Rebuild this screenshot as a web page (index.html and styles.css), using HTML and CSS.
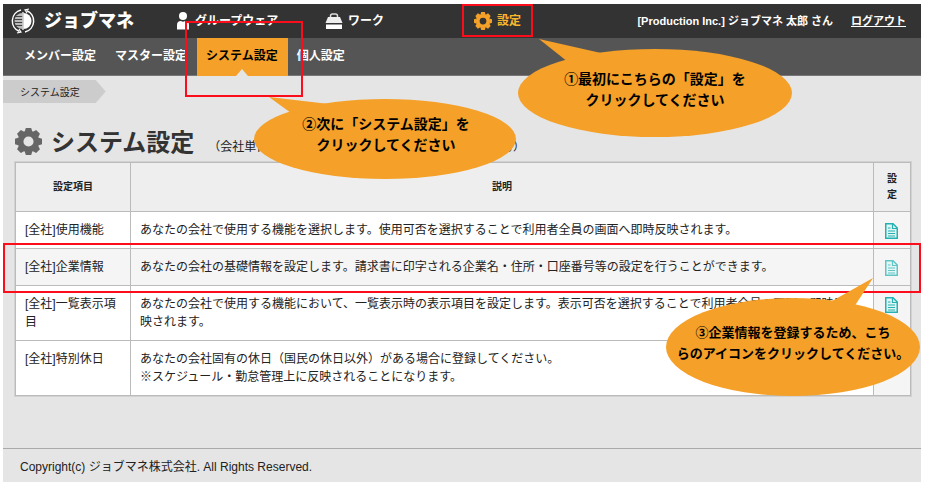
FILE: index.html
```
<!DOCTYPE html>
<html lang="ja">
<head>
    <meta charset="UTF-8">
    <meta name="viewport" content="width=device-width, initial-scale=1.0">
    <title>システム設定 | ジョブマネ</title>
    <link rel="stylesheet" href="styles.css">
</head>
<body>
    <!-- shared icons -->
    <svg class="icon-defs" width="0" height="0" aria-hidden="true">
        <symbol id="icon-gear" viewBox="0 0 24 24">
            <circle cx="12" cy="12" r="7" fill="none" stroke="currentColor" stroke-width="5"/>
            <g fill="currentColor">
                <path id="tooth" d="M8.5 3.5 9.6 0h4.8l1.1 3.5z"/>
                <use href="#tooth" transform="rotate(45 12 12)"/>
                <use href="#tooth" transform="rotate(90 12 12)"/>
                <use href="#tooth" transform="rotate(135 12 12)"/>
                <use href="#tooth" transform="rotate(180 12 12)"/>
                <use href="#tooth" transform="rotate(225 12 12)"/>
                <use href="#tooth" transform="rotate(270 12 12)"/>
                <use href="#tooth" transform="rotate(315 12 12)"/>
            </g>
        </symbol>
        <symbol id="icon-doc" viewBox="0 0 13 16">
            <path d="M.75.75H8L12.25 5v10.25H.75z" fill="#e2f5f5" stroke="currentColor" stroke-width="1.5"/>
            <path d="M7.5.5v5h5M3 5h2.5M3 8h7M3 10.5h7M3 13h7" fill="none" stroke="currentColor" stroke-width="1.2"/>
        </symbol>
    </svg>

<div class="page">
    <header class="header">
        <a class="logo" href="#">
            <svg class="logo-mark" viewBox="0 0 26 26" aria-hidden="true">
                <path d="M12.500 5a8 8 0 0 0 0 16z" fill="#bbb"/>
                <path d="M5 8.500h8M4 11.500h9M4 14.500h9M5 17.500h8" stroke="#444" stroke-width="1"/>
                <path d="M13.500 5a8 8 0 0 1 0 16z" fill="#fff"/>
                <path d="M13 4v18" stroke="#fff" stroke-width="1.200"/>
                <path d="M11 2A11.300 11.300 0 0 0 9.500 23.500M15 24A11.300 11.300 0 0 0 16.500 2.500" fill="none" stroke="#fff" stroke-width="1.500"/>
                <path d="M7 25l4-1-2-3M19 1l-4 1 2 3" fill="none" stroke="#fff" stroke-width="1.200"/>
            </svg>
            <span>ジョブマネ</span>
        </a>
        <nav class="main-nav">
            <a href="#">
                <svg class="icon-person" viewBox="0 0 14 18" aria-hidden="true"><circle cx="7" cy="4" r="4" fill="#fff"/><path d="M1 17.500V13q0-4 4-4 2 1.500 4 0 4 0 4 4v4.500z" fill="#fff"/></svg>
                <span>グループウェア</span>
            </a>
            <a href="#">
                <svg class="icon-case" viewBox="0 0 18 16" aria-hidden="true"><path d="M5.500 5V3q0-2 2-2h3q2 0 2 2v2" fill="none" stroke="#ddd" stroke-width="1.500"/><path d="M3 4h12l2.500 6H.5z" fill="#eee"/><path d="M1 11.500h16V16H1z" fill="#fff"/></svg>
                <span>ワーク</span>
            </a>
            <a class="current" href="#">
                <svg class="icon-setting" aria-hidden="true"><use href="#icon-gear"/></svg>
                <span>設定</span>
            </a>
        </nav>
        <div class="user">
            <span>[Production Inc.] ジョブマネ 太郎 さん</span>
            <a href="#">ログアウト</a>
        </div>
    </header>

    <nav class="sub-nav">
        <a href="#">メンバー設定</a>
        <a href="#">マスター設定</a>
        <a class="active" href="#">システム設定</a>
        <a href="#">個人設定</a>
    </nav>

    <main class="content">
        <div class="breadcrumb"><span>システム設定</span></div>
        <div class="title">
            <svg class="icon-title" aria-hidden="true"><use href="#icon-gear"/></svg>
            <h1>システム設定</h1>
            <p>（会社単位で使用する機能や基本情報の設定ができます。）</p>
        </div>

        <table class="settings">
            <thead>
                <tr>
                    <th class="col-name">設定項目</th>
                    <th>説明</th>
                    <th class="col-link">設定</th>
                </tr>
            </thead>
            <tbody>
                <tr>
                    <td>[全社]使用機能</td>
                    <td>あなたの会社で使用する機能を選択します。使用可否を選択することで利用者全員の画面へ即時反映されます。</td>
                    <td class="link"><a href="#" aria-label="使用機能の設定"><svg><use href="#icon-doc"/></svg></a></td>
                </tr>
                <tr class="hover">
                    <td>[全社]企業情報</td>
                    <td>あなたの会社の基礎情報を設定します。請求書に印字される企業名・住所・口座番号等の設定を行うことができます。</td>
                    <td class="link"><a href="#" aria-label="企業情報の設定"><svg><use href="#icon-doc"/></svg></a></td>
                </tr>
                <tr>
                    <td>[全社]一覧表示項目</td>
                    <td>あなたの会社で使用する機能において、一覧表示時の表示項目を設定します。表示可否を選択することで利用者全員の画面へ即時反映されます。</td>
                    <td class="link"><a href="#" aria-label="一覧表示項目の設定"><svg><use href="#icon-doc"/></svg></a></td>
                </tr>
                <tr>
                    <td>[全社]特別休日</td>
                    <td>あなたの会社固有の休日（国民の休日以外）がある場合に登録してください。<br>※スケジュール・勤怠管理上に反映されることになります。</td>
                    <td class="link"></td>
                </tr>
            </tbody>
        </table>
    </main>

    <footer class="footer">Copyright(c) ジョブマネ株式会社. All Rights Reserved.</footer>

    <!-- step by step guide, over the page -->
    <div class="frame frame-1"></div>
    <div class="frame frame-2"></div>
    <div class="frame frame-3"></div>

    <div class="callout callout-1">
        <svg viewBox="0 0 276 100" aria-hidden="true"><ellipse cx="138" cy="55" rx="137" ry="44"/><path d="M22 1l62 14-33 9z"/></svg>
        <p>①最初にこちらの「設定」を<br>クリックしてください</p>
    </div>
    <div class="callout callout-2">
        <svg viewBox="0 0 264 84" aria-hidden="true"><ellipse cx="131" cy="43" rx="131" ry="40"/><path d="M15 1l60 7-38 9z"/></svg>
        <p>②次に「システム設定」を<br>クリックしてください</p>
    </div>
    <div class="callout callout-3">
        <svg viewBox="0 0 256 118" aria-hidden="true"><ellipse cx="128" cy="69" rx="127" ry="49"/><path d="M208 0l-41 23 20 9z"/></svg>
        <p>③企業情報を登録するため、こち<br>らのアイコンをクリックしてください。</p>
    </div>
</div>
</body>
</html>
```
FILE: styles.css
```
* {
    box-sizing: border-box;
}

body {
    margin: 0;
    padding: 4px 4px 4px 3px;
    background: #fff;
    color: #222;
    font-family: "Liberation Sans", "Noto Sans CJK JP", sans-serif;
    font-size: 12px;
    line-height: 18px;
}

h1, p {
    margin: 0;
}

a {
    color: inherit;
    text-decoration: none;
}

.icon-defs {
    position: absolute;
}

.page {
    position: relative;
    display: flex;
    flex-direction: column;
    min-height: calc(100vh - 8px);
    background: #e5e5e5;
}

/* header */
.header {
    display: flex;
    align-items: center;
    height: 34px;
    padding: 0 15px 0 7px;
    background: #333;
    color: #fff;
    font-weight: bold;
}

.logo {
    display: flex;
    align-items: center;
    gap: 8px;
    width: 166px;
    font-size: 18px;
    font-weight: 900;
}

.logo-mark {
    width: 26px;
    height: 26px;
}

.main-nav {
    display: grid;
    grid-template-columns: repeat(3, 149px);
}

.main-nav a {
    display: flex;
    align-items: center;
    gap: 5px;
}

.main-nav .current {
    color: #fbb72c;
}

.icon-person {
    width: 14px;
    height: 18px;
}

.icon-case {
    width: 18px;
    height: 16px;
}

.icon-setting {
    width: 18px;
    height: 18px;
    color: #f4a029;
}

.user {
    display: flex;
    gap: 18px;
    margin-left: auto;
    font-size: 11px;
    white-space: nowrap;
}

.user a {
    text-decoration: underline;
}

.sub-nav {
    display: flex;
    height: 38px;
    padding-left: 12px;
    border-bottom: 1px solid #777;
    background: #555;
    color: #fff;
    font-weight: bold;
    line-height: 36px;
}

.sub-nav a {
    position: relative;
    padding: 0 10px 0 9px;
}

.sub-nav .active {
    height: 38px;
    background: #f4a029;
    color: #000;
}

.sub-nav .active::after {
    content: "";
    position: absolute;
    left: 50%;
    bottom: 0;
    margin-left: -6px;
    border: 6px solid transparent;
    border-top: 0;
    border-bottom: 7px solid #e5e5e5;
}

/* contents */
.content {
    flex: 1;
    padding: 4px 10px 0 0;
}

.breadcrumb {
    display: flex;
}

.breadcrumb span {
    height: 23px;
    padding: 0 26px 0 17px;
    background: #ccc;
    clip-path: polygon(0 0, calc(100% - 10px) 0, 100% 50%, calc(100% - 10px) 100%, 0 100%);
    font-size: 10px;
    line-height: 26px;
}

.title {
    display: flex;
    align-items: center;
    margin: 24px 0 3px 12px;
}

.title h1 {
    margin-left: 9px;
    color: #333;
    font-size: 24px;
    line-height: 32px;
}

.title p {
    margin-left: 14px;
    padding-top: 8px;
}

.icon-title {
    width: 27px;
    height: 27px;
    margin-bottom: 3px;
    color: #666;
}

.settings {
    width: calc(100% - 12px);
    margin-left: 12px;
    border: 1px solid #bbb;
    border-collapse: collapse;
    table-layout: fixed;
    background: #fff;
    box-shadow: 0 0 0 1px #d2d2d2;
}

.settings th,
.settings td {
    border: 1px solid #bbb;
}

.settings th {
    padding: 8px 10px;
    background: #eee;
    font-size: 10px;
    line-height: 16px;
}

.settings td {
    padding: 9px 16px 9px 9px;
    vertical-align: top;
}

.settings td:first-child {
    padding-right: 9px;
}

.settings .col-name {
    width: 115px;
}

.settings .col-link {
    width: 37px;
    padding: 8px 12px;
}

.settings .link {
    padding: 11px 0 0 11px;
    background: #f5f5f5;
}

.link svg {
    display: block;
    width: 13px;
    height: 16px;
    color: #25b1b1;
}

.settings .hover td {
    background: #f5f5f5;
}

.hover svg {
    opacity: .7;
}

.footer {
    padding: 9px 17px 6px;
    border-top: 1px solid #aaa;
}

/* guide */
.frame {
    position: absolute;
    border: 2px solid #fc0d1b;
    pointer-events: none;
}

.frame-1 {
    top: 0;
    left: 459px;
    width: 71px;
    height: 33px;
}

.frame-2 {
    top: 17px;
    left: 182px;
    width: 118px;
    height: 76px;
}

.frame-3 {
    top: 239px;
    left: 0;
    right: 0;
    height: 50px;
}

.callout {
    position: absolute;
    color: #000;
    font-size: 14px;
    font-weight: bold;
    line-height: 21px;
    text-align: center;
    white-space: nowrap;
}

.callout svg {
    display: block;
    width: 100%;
    fill: #f4a029;
}

.callout p {
    position: absolute;
    left: 0;
    right: 0;
}

.callout-1 {
    top: 34px;
    left: 514px;
    width: 276px;
}

.callout-1 p {
    top: 31px;
}

.callout-2 {
    top: 92px;
    left: 251px;
    width: 264px;
}

.callout-2 p {
    top: 18px;
}

.callout-3 {
    top: 274px;
    right: 0;
    width: 256px;
    font-size: 13px;
}

.callout-3 p {
    top: 44px;
}
```
